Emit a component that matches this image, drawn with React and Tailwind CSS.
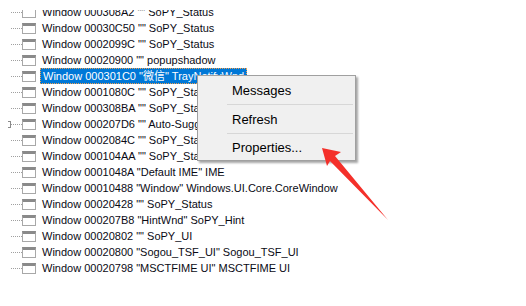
import React from 'react';

const rows = [
  'Window 000308A2 "" SoPY_Status',
  'Window 00030C50 "" SoPY_Status',
  'Window 0002099C "" SoPY_Status',
  'Window 00020900 "" popupshadow',
  'Window 000301C0 "微信" TrayNotifyWnd',
  'Window 0001080C "" SoPY_Status',
  'Window 000308BA "" SoPY_Status',
  'Window 000207D6 "" Auto-Suggest Dropdown',
  'Window 0002084C "" SoPY_Status',
  'Window 000104AA "" SoPY_Status',
  'Window 0001048A "Default IME" IME',
  'Window 00010488 "Window" Windows.UI.Core.CoreWindow',
  'Window 00020428 "" SoPY_Status',
  'Window 000207B8 "HintWnd" SoPY_Hint',
  'Window 00020802 "" SoPY_UI',
  'Window 00020800 "Sogou_TSF_UI" Sogou_TSF_UI',
  'Window 00020798 "MSCTFIME UI" MSCTFIME UI',
];

const SELECTED = 4;

const WindowIcon = () => (
  <span className="block w-[14px] h-[11px] bg-white border border-[#a8a8a8] border-t-[3px] border-t-[#8a8a8a]" />
);

const TreeRow = ({ label, index }) => {
  const selected = index === SELECTED;
  return (
    <div className="flex items-center h-[16px]">
      {index === 7 ? (
        <span className="w-[11px] flex justify-end">
          <span className="block w-[3px] h-[7px] border-t border-b border-r border-[#8a8a8a]" />
        </span>
      ) : (
        <span className="w-[11px]" />
      )}
      <span className="w-[11px] border-t border-dotted border-[#a0a0a0]" />
      <WindowIcon />
      <span
        className={`ml-[4px] h-[16px] flex items-center px-[2px] whitespace-nowrap ${
          selected ? 'bg-[#0078d7] text-white border border-dotted border-[#f0a050]' : 'text-[#0a0a14]'
        }`}
      >
        {label}
      </span>
    </div>
  );
};

const MenuItem = ({ children, h }) => (
  <div className={`flex items-center pl-[34px] ${h}`}>{children}</div>
);

const Separator = () => <div className="h-px bg-[#d7d7d7] ml-[29px] mr-[2px]" />;

export default function App() {
  return (
    <div
      className="relative w-[526px] h-[306px] bg-white overflow-hidden"
      style={{ fontFamily: '"Liberation Sans", "Noto Sans CJK SC", sans-serif' }}
    >
      <div className="pt-[10px] h-full">
        <div className="overflow-hidden h-full">
          <div className="-mt-[6px] text-[11px] leading-none">
            {rows.map((r, i) => (
              <TreeRow key={i} label={r} index={i} />
            ))}
          </div>
        </div>
      </div>

      {/* context menu */}
      <div className="absolute left-[197px] top-[75px] w-[159px] bg-[#f0f0f0] border border-[#a0a0a0] shadow-[2px_2px_2px_rgba(0,0,0,0.35)] text-[13px] text-[#000] leading-none">
        <MenuItem h="h-[28px]">Messages</MenuItem>
        <Separator />
        <MenuItem h="h-[28px]">Refresh</MenuItem>
        <Separator />
        <MenuItem h="h-[26px]">Properties...</MenuItem>
      </div>

      {/* red arrow */}
      <svg className="absolute left-0 top-0" width="526" height="306" viewBox="0 0 526 306">
        <polygon points="322,148 341,152 335,156 388,220 330,161 327,166" fill="#f4302a" />
      </svg>
    </div>
  );
}
